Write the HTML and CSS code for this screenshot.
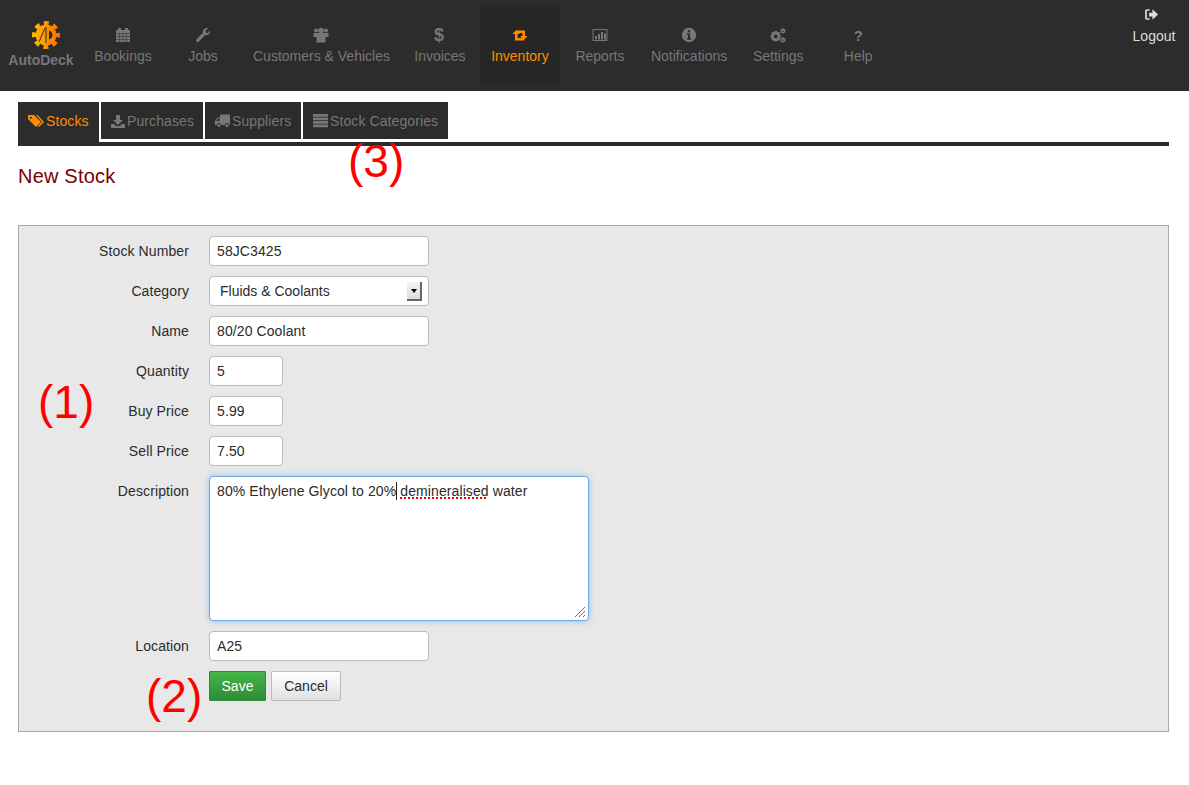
FILE: index.html
```html
<!DOCTYPE html>
<html lang="en">
<head>
    <meta charset="UTF-8">
    <title>New Stock</title>
    <meta name="viewport" content="width=device-width, initial-scale=1">
    <link rel="stylesheet" href="styles.css">
</head>
<body>
<header class="topbar">
    <div class="logo">
        <svg class="logo-gear" viewBox="0 0 28 28">
            <defs>
                <linearGradient id="gearFill" gradientUnits="userSpaceOnUse" x1="0" y1="0" x2="28" y2="0">
                    <stop offset="0" stop-color="#ffc000"/>
                    <stop offset="1" stop-color="#ff6a00"/>
                </linearGradient>
            </defs>
            <circle cx="14" cy="14" r="10.500" fill="url(#gearFill)"/>
            <circle cx="14" cy="14" r="12" fill="none" stroke="url(#gearFill)" stroke-width="4" stroke-dasharray="5 4.420" stroke-dashoffset="2.500"/>
            <path fill="none" stroke="#2c2c2c" stroke-width="1" d="M7 21L13 7M14 6v16"/>
            <path fill="#2c2c2c" d="M17 9.500c2.500 1 3.500 2.700 3.500 4.500s-1 3.500-3.500 4.500z"/>
        </svg>
        <span class="logo-name">AutoDeck</span>
    </div>
    <nav class="mainnav">
        <a class="navitem" href="#">
            <svg class="navicon" viewBox="0 0 16 16"><path d="M1 3h2V1h3v2h4V1h3v2h2v12H1z"/><path stroke="#2c2c2c" stroke-opacity=".55" fill="none" d="M1 6.500h14M1 9.500h14M1 12.500h14M4.500 6v9M8 6v9M11.500 6v9"/></svg>
            <span>Bookings</span>
        </a>
        <a class="navitem" href="#">
            <svg class="navicon" viewBox="0 0 16 16"><path d="M15 4.500c0 2.500-2.300 4.200-4.800 3.600L4 14.500c-.8.800-1.800.8-2.500.1s-.6-1.700.1-2.400l6.300-6.400C7.300 3.300 9.400 1 12 1c.5 0 .9.100 1.200.2L10.500 4l.5 1.700 1.700.4 2.100-2.700c.1.300.2.700.2 1.100z"/></svg>
            <span>Jobs</span>
        </a>
        <a class="navitem" href="#">
            <svg class="navicon" viewBox="0 0 16 16"><circle cx="3" cy="3.500" r="2"/><circle cx="13" cy="3.500" r="2"/><circle cx="8" cy="3.500" r="2.800"/><path d="M.5 6h15v4h-3v5.500h-9V10h-3z"/></svg>
            <span>Customers &amp; Vehicles</span>
        </a>
        <a class="navitem" href="#">
            <span class="navicon glyph dollar">$</span>
            <span>Invoices</span>
        </a>
        <a class="navitem active" href="#">
            <svg class="navicon" viewBox="0 0 16 16"><path d="M3 7H.5L4.250 3 8 7H5.500v4H10.500l2 2.500H3zM13 9h2.500L11.750 13 8 9h2.500V6H5.500L3.500 3.500H13z"/></svg>
            <span>Inventory</span>
        </a>
        <a class="navitem" href="#">
            <svg class="navicon" viewBox="0 0 16 16"><path fill-rule="evenodd" d="M.5 2h15v12H.5zm1 1v10h13V3z"/><path d="M3 9h2v3.500H3zM6 7h2v5.500H6zM9 5h2v7.500H9zM12 6.500h2v6h-2z"/></svg>
            <span>Reports</span>
        </a>
        <a class="navitem navitem-notifications" href="#">
            <svg class="navicon" viewBox="0 0 16 16"><path fill-rule="evenodd" d="M8 .800a7.200 7.200 0 1 1 0 14.400A7.200 7.200 0 0 1 8 .800zM6.900 3.300v2h2.200v-2zM6 6.500V8h1v3.200H6v1.500h4v-1.500H9V6.500z"/></svg>
            <span>Notifications</span>
        </a>
        <a class="navitem" href="#">
            <svg class="navicon" viewBox="0 0 16 16"><path fill-rule="evenodd" d="M4.500 4h2.500l.4 1.300 1.400-.6 1.500 1.600-.7 1.300 1.300.6v2.300l-1.300.5.700 1.300-1.500 1.600-1.400-.7-.4 1.300H4.500l-.4-1.300-1.300.7-1.600-1.600.7-1.300L.5 10.500V8.200l1.400-.6-.7-1.300 1.600-1.600 1.300.6zM5.700 7.500a1.900 1.900 0 1 0 0 3.800 1.900 1.900 0 0 0 0-3.800z"/><path fill-rule="evenodd" d="M12.500 1l1 .1.200.8.700.4.800-.3.500.9-.6.600v.9l.6.600-.5.900-.8-.3-.7.400-.2.800h-1l-.2-.8-.7-.4-.8.300-.5-.9.600-.6v-.9l-.6-.6.500-.9.800.3.700-.4zm.500 2.400a.8.800 0 1 0 0 1.600.8.800 0 0 0 0-1.600zM12.500 10l1 .1.200.8.700.4.800-.3.500.9-.6.600v.9l.6.600-.5.900-.8-.3-.7.400-.2.800h-1l-.2-.8-.7-.4-.8.300-.5-.9.600-.6v-.9l-.6-.6.500-.9.800.3.700-.4zm.500 2.400a.8.800 0 1 0 0 1.600.8.800 0 0 0 0-1.600z"/></svg>
            <span>Settings</span>
        </a>
        <a class="navitem" href="#">
            <span class="navicon glyph question">?</span>
            <span>Help</span>
        </a>
    </nav>
    <a class="logout" href="#">
        <svg class="logout-icon" viewBox="0 0 16 16"><path d="M6 2.500H3C2 2.500 1.200 3.300 1.200 4.300v7.400c0 1 .8 1.800 1.800 1.800h3V12H3V4h3z"/><path d="M5.500 6H9V2.500L15 8l-6 5.500V10H5.500z"/></svg>
        <span>Logout</span>
    </a>
</header>

<div class="page">
    <div class="tabs">
        <a class="tab tab-stocks active" href="#">
            <svg class="tabicon" viewBox="0 0 16 16"><path d="M0 2h6l7 7-5 5-8-8z"/><path d="M8 2h1.500l6.500 7-5 5-1-1 4-4z"/><circle cx="2.800" cy="4.800" r="1.100" fill="#2c2c2c"/></svg>
            Stocks
        </a>
        <a class="tab tab-purchases" href="#">
            <svg class="tabicon" viewBox="0 0 14 14"><path d="M5 1h4v5h3l-5 5-5-5h3zM0 10h3l2 2h4l2-2h3v4H0z"/></svg>
            Purchases
        </a>
        <a class="tab tab-suppliers" href="#">
            <svg class="tabicon" viewBox="0 0 15 15"><path fill-rule="evenodd" d="M5 1.500h10V12h-1a2 2 0 0 0-4 0H6a2 2 0 0 0-4 0H0V8l2.500-3.500H5zM3 5.500L1.200 8H4.500V5.500z"/><circle cx="4" cy="12.500" r="1.500"/><circle cx="12" cy="12.500" r="1.500"/></svg>
            Suppliers
        </a>
        <a class="tab tab-categories" href="#">
            <svg class="tabicon" viewBox="0 0 15 15"><path d="M0 1h15v2.800H0zM0 4.500h15v2.800H0zM0 8h15v2.800H0zM0 11.500h15v2.800H0z"/></svg>
            Stock Categories
        </a>
    </div>

    <h1 class="title">New Stock</h1>

    <form class="stockform" autocomplete="off">
        <label class="fieldlabel">Stock Number</label>
        <input class="field" type="text" value="58JC3425">

        <label class="fieldlabel">Category</label>
        <div class="selectwrap">
            <select class="field selectfield">
                <option>Fluids &amp; Coolants</option>
            </select>
            <span class="selectarrow"></span>
        </div>

        <label class="fieldlabel">Name</label>
        <input class="field" type="text" value="80/20 Coolant">

        <label class="fieldlabel">Quantity</label>
        <input class="field short" type="text" value="5">

        <label class="fieldlabel">Buy Price</label>
        <input class="field short" type="text" value="5.99">

        <label class="fieldlabel">Sell Price</label>
        <input class="field short" type="text" value="7.50">

        <label class="fieldlabel">Description</label>
        <div class="textbox">80% Ethylene Glycol to 20%<span class="caret"></span> <span class="misspelt">demineralised</span> water
            <svg class="resizer" viewBox="0 0 12 12"><path d="M11 1L1 11M11 5L5 11M11 9L9 11" stroke="#777" fill="none"/></svg>
        </div>

        <label class="fieldlabel">Location</label>
        <input class="field" type="text" value="A25">

        <div class="actions">
            <button class="btn btn-save" type="button">Save</button>
            <button class="btn btn-cancel" type="button">Cancel</button>
        </div>
    </form>
</div>

<!-- numbered callouts painted over the screen -->
<span class="callout callout-1">(1)</span>
<span class="callout callout-2">(2)</span>
<span class="callout callout-3">(3)</span>
</body>
</html>
```

FILE: styles.css
```css
body {
  margin: 0;
  background: #fff;
  color: #2b2b2b;
  font-family: "Liberation Sans", Arial, sans-serif;
  font-size: 14px;
  position: relative;
}
a {
  text-decoration: none;
}

.topbar {
  display: flex;
  height: 91px;
  background: #2c2c2c;
}
.logo {
  width: 83px;
  display: flex;
  flex-direction: column;
  align-items: center;
  padding-top: 21px;
  padding-right: 1px;
  box-sizing: border-box;
}
.logo-gear {
  width: 28px;
  height: 28px;
  margin-left: 10px;
}
.logo-name {
  color: #777;
  font-weight: 700;
  line-height: 20px;
  margin-top: 1px;
}
.mainnav {
  display: flex;
  flex: 1;
}
.navitem {
  min-width: 60px;
  height: 58px;
  margin-top: 5px;
  padding: 22px 10px 0;
  display: flex;
  flex-direction: column;
  align-items: center;
  color: #777;
  fill: #777;
  line-height: 20px;
  white-space: nowrap;
}
.navitem-notifications {
  padding: 22px 11px 0;
}
.navitem.active {
  background: #262626;
  color: #ff8c00;
  fill: #ff8c00;
}
.navicon {
  width: 16px;
  height: 16px;
  margin-bottom: 3px;
}
.glyph {
  font-weight: 700;
  line-height: 16px;
  text-align: center;
}
.dollar {
  font-size: 18px;
  margin-left: -2px;
}
.question {
  font-size: 15px;
  padding-top: 1px;
  height: 15px;
}
.logout {
  display: flex;
  flex-direction: column;
  align-items: center;
  width: 44px;
  margin-right: 13px;
  padding-top: 7px;
  color: #ddd;
  fill: #ddd;
  line-height: 20px;
}
.logout-icon {
  width: 15px;
  height: 15px;
  margin: 0 5px 4px 0;
}

.page {
  padding: 11px 20px 0 18px;
}
.tabs {
  display: flex;
  gap: 2px;
  align-items: flex-start;
  border-bottom: 4px solid #2c2c2c;
  height: 40px;
}
.tab {
  display: flex;
  align-items: center;
  gap: 2px;
  height: 37px;
  padding-left: 10px;
  box-sizing: border-box;
  background: #2c2c2c;
  color: #777;
  fill: #777;
  letter-spacing: .1px;
  white-space: nowrap;
}
.tab.active {
  height: 40px;
  padding-bottom: 3px;
  color: #ff8c00;
  fill: #ff8c00;
}
.tab-stocks { width: 81px; }
.tab-purchases { width: 102px; }
.tab-suppliers { width: 96px; }
.tab-categories { width: 145px; }
.tabicon {
  width: 15px;
  height: 15px;
}
.tab-stocks .tabicon {
  width: 16px;
  height: 16px;
}
.tab-purchases .tabicon {
  width: 14px;
  height: 14px;
}
.title {
  margin: 18px 0 37px;
  color: #700;
  font-size: 20px;
  font-weight: 400;
  line-height: 24px;
  letter-spacing: .2px;
}

.stockform {
  display: grid;
  grid-template-columns: 170px 1fr;
  column-gap: 20px;
  row-gap: 10px;
  padding: 10px 0 30px;
  background: #e8e8e8;
  border: 1px solid #aaa;
}
.fieldlabel {
  text-align: right;
  line-height: 30px;
  letter-spacing: .1px;
}
.field {
  width: 220px;
  height: 30px;
  box-sizing: border-box;
  padding: 0 7px;
  border: 1px solid #bbb;
  border-radius: 4px;
  background: #fff;
  color: #2b2b2b;
  font: inherit;
  letter-spacing: .1px;
}
.field.short {
  width: 74px;
}
.selectwrap {
  position: relative;
  width: 220px;
}
.selectfield {
  appearance: none;
  padding-left: 10px;
  letter-spacing: 0;
}
.selectarrow {
  position: absolute;
  top: 6px;
  right: 7px;
  width: 15px;
  height: 19px;
  box-sizing: border-box;
  background: linear-gradient(#f4f4f4, #ddd);
  border-right: 2px solid #666;
  border-bottom: 2px solid #666;
  pointer-events: none;
}
.selectarrow::after {
  content: "";
  position: absolute;
  left: 4px;
  top: 7px;
  border: 3px solid transparent;
  border-top: 4px solid #000;
  border-bottom: 0;
}
.textbox {
  position: relative;
  width: 380px;
  height: 145px;
  box-sizing: border-box;
  padding: 4px 7px;
  border: 1px solid #6aa9f0;
  border-radius: 4px;
  background: #fff;
  box-shadow: 0 0 6px rgba(82, 168, 236, .6);
  line-height: 20px;
  letter-spacing: .1px;
}
.caret {
  display: inline-block;
  width: 1px;
  height: 18px;
  margin-right: -1px;
  background: #222;
  vertical-align: -4px;
}
.misspelt {
  text-decoration: underline dotted #e00;
  text-decoration-thickness: 2px;
}
.resizer {
  position: absolute;
  right: 2px;
  bottom: 2px;
  width: 12px;
  height: 12px;
}
.actions {
  grid-column: 2;
  display: flex;
  gap: 5px;
}
.btn {
  height: 30px;
  box-sizing: border-box;
  padding: 0;
  border-radius: 1px;
  font: inherit;
}
.btn-save {
  width: 57px;
  color: #fff;
  background: linear-gradient(#45b649, #2e8b36);
  border: 1px solid #2f8a35;
}
.btn-cancel {
  width: 70px;
  color: #2b2b2b;
  background: linear-gradient(#fff, #e0e0e0);
  border: 1px solid #bbb;
}

.callout {
  position: absolute;
  color: #f00;
  font-size: 46px;
  line-height: 52px;
}
.callout-1 { left: 38px; top: 376px; }
.callout-2 { left: 146px; top: 670px; }
.callout-3 { left: 348px; top: 135px; }
```
